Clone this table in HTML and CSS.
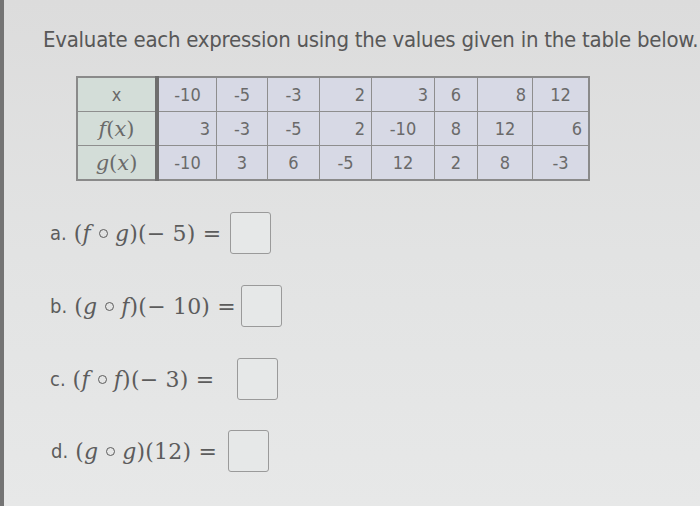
FILE: index.html
```html
<!DOCTYPE html>
<html lang="en">
<head>
    <meta charset="UTF-8">
    <title>Composite Functions</title>
    <link rel="stylesheet" href="styles.css">
</head>
<body>
    <div class="page">
        <h1 class="prompt">Evaluate each expression using the values given in the table below.</h1>

        <table class="values">
            <tr>
                <th>x</th>
                <td>-10</td><td>-5</td><td>-3</td><td class="r">2</td><td class="r">3</td><td>6</td><td class="r">8</td><td>12</td>
            </tr>
            <tr>
                <th class="math"><i>f</i>(<i>x</i>)</th>
                <td class="r">3</td><td>-3</td><td>-5</td><td class="r">2</td><td>-10</td><td>8</td><td>12</td><td class="r">6</td>
            </tr>
            <tr>
                <th class="math"><i>g</i>(<i>x</i>)</th>
                <td>-10</td><td>3</td><td>6</td><td>-5</td><td>12</td><td>2</td><td>8</td><td>-3</td>
            </tr>
        </table>

        <ol class="questions">
            <li class="q q-a"><span class="letter">a.</span> <span class="math">(<i>f</i><span class="ring"></span><i>g</i>)(− 5) =</span> <span class="answer"></span></li>
            <li class="q q-b"><span class="letter">b.</span> <span class="math">(<i>g</i><span class="ring"></span><i>f</i>)(− 10) =</span> <span class="answer"></span></li>
            <li class="q q-c"><span class="letter">c.</span> <span class="math">(<i>f</i><span class="ring"></span><i>f</i>)(− 3) =</span> <span class="answer"></span></li>
            <li class="q q-d"><span class="letter">d.</span> <span class="math">(<i>g</i><span class="ring"></span><i>g</i>)(12) =</span> <span class="answer"></span></li>
        </ol>
    </div>
</body>
</html>
```

FILE: styles.css
```css
html, body {
    margin: 0;
    height: 100%;
}
body {
    background: linear-gradient(180deg, #dcdcdc 0%, #e2e3e3 50%, #e7e8e8 100%);
    color: #5a5a5a;
    font-family: "DejaVu Sans Condensed", "DejaVu Sans", sans-serif;
    border-left: 4px solid #747474;
    box-sizing: border-box;
    overflow: hidden;
}
.page {
    padding: 27px 0 0 39px;
}
.prompt {
    margin: 0;
    font-size: 22px;
    font-weight: normal;
    letter-spacing: -0.25px;
    white-space: nowrap;
    color: #585858;
}
.values {
    margin: 24px 0 0 33px;
    border-collapse: collapse;
    border: 2px solid #8a8a8a;
    font-size: 18px;
    color: #6a6a6a;
}
.values th,
.values td {
    height: 33px;
    padding: 0 6px;
    border: 1px solid #8e8e8e;
    text-align: center;
    background: #d7d9e5;
}
.values th {
    width: 65px;
    font-weight: normal;
    background: #d3ddd8;
    border-right: 4px solid #6e6e6e;
}
.values td.r {
    text-align: right;
}
.values tr td:nth-child(2) { width: 45px; }
.values tr td:nth-child(3) { width: 38px; }
.values tr td:nth-child(4) { width: 39px; }
.values tr td:nth-child(5) { width: 39px; }
.values tr td:nth-child(6) { width: 50px; }
.values tr td:nth-child(7) { width: 30px; }
.values tr td:nth-child(8) { width: 42px; }
.values tr td:nth-child(9) { width: 43px; }
.math {
    font-family: "DejaVu Serif", "Liberation Serif", serif;
}
.values th.math {
    font-size: 21px;
}
.questions {
    list-style: none;
    margin: 0;
    padding: 0 0 0 7px;
}
.q {
    display: flex;
    align-items: center;
    gap: 9px;
    color: #5c5c5c;
}
.q-a { margin-top: 31px; }
.q-b { margin-top: 31px; }
.q-b .answer { margin-left: -4px; }
.q-c { margin-top: 31px; }
.q-c .answer { margin-left: 14px; }
.q-d { margin-top: 30px; margin-left: 1px; }
.q-d .math { letter-spacing: -0.6px; }
.q-d .answer { margin-left: 2px; }
.letter {
    font-family: "DejaVu Sans Condensed", "DejaVu Sans", sans-serif;
    font-size: 20px;
    margin-right: -2px;
}
.q .math {
    font-size: 22px;
    letter-spacing: 0.2px;
}
.ring {
    display: inline-block;
    width: 7px;
    height: 7px;
    border: 1.6px solid currentColor;
    border-radius: 50%;
    margin: 0 7px 0 8px;
    vertical-align: 3px;
}
.answer {
    width: 39px;
    height: 40px;
    border: 1px solid #9a9a9a;
    border-radius: 3px;
    background: #e6e8e8;
}
```
